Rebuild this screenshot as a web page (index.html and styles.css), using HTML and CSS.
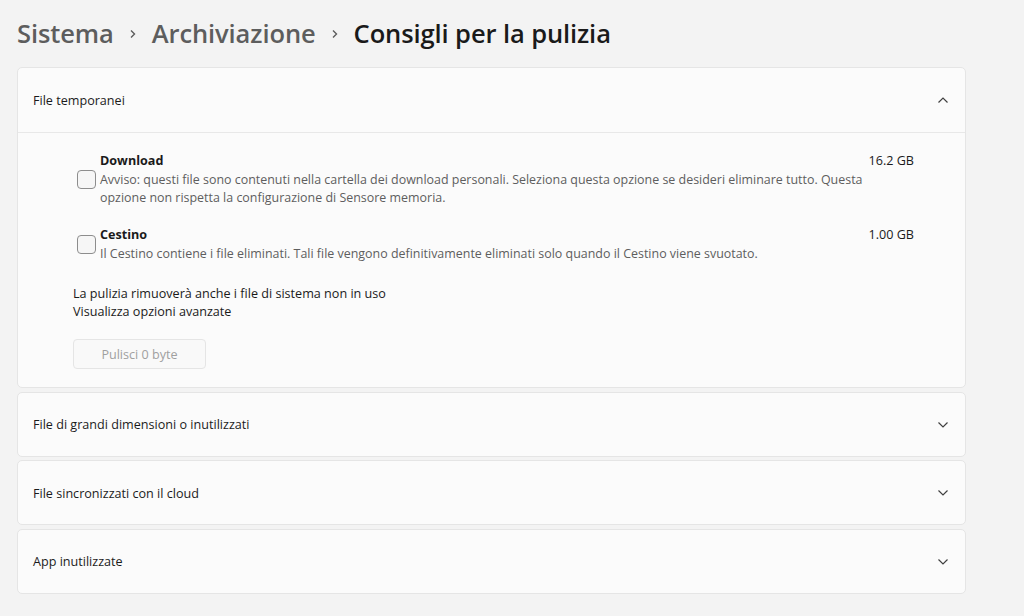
FILE: index.html
```html
<!DOCTYPE html>
<html lang="it">
<head>
<meta charset="utf-8">
<title>Consigli per la pulizia</title>
<link rel="stylesheet" href="styles.css">
</head>
<body>
<div class="page">
  <h1 class="crumbs">
    <span class="crumb">Sistema</span>
    <svg class="sep" width="10" height="12" viewBox="0 0 10 12"><path d="M3 2.5 L6.5 6 L3 9.5" fill="none" stroke="#5c5c5c" stroke-width="1.4"/></svg>
    <span class="crumb">Archiviazione</span>
    <svg class="sep" width="10" height="12" viewBox="0 0 10 12"><path d="M3 2.5 L6.5 6 L3 9.5" fill="none" stroke="#5c5c5c" stroke-width="1.4"/></svg>
    <span class="crumb current">Consigli per la pulizia</span>
  </h1>

  <div class="cards">
    <section class="card">
      <div class="card-head open">
        <span class="head-label">File temporanei</span>
        <svg class="chev" width="12" height="8" viewBox="0 0 12 8"><path d="M1.5 6.5 L6 2 L10.5 6.5" fill="none" stroke="#404040" stroke-width="1.2"/></svg>
      </div>
      <div class="card-body">
        <div class="item">
          <span class="check"></span>
          <div class="item-text">
            <div class="item-title">Download</div>
            <div class="item-desc">Avviso: questi file sono contenuti nella cartella dei download personali. Seleziona questa opzione se desideri eliminare tutto. Questa opzione non rispetta la configurazione di Sensore memoria.</div>
          </div>
          <div class="item-size">16.2 GB</div>
        </div>
        <div class="item">
          <span class="check"></span>
          <div class="item-text">
            <div class="item-title">Cestino</div>
            <div class="item-desc">Il Cestino contiene i file eliminati. Tali file vengono definitivamente eliminati solo quando il Cestino viene svuotato.</div>
          </div>
          <div class="item-size">1.00 GB</div>
        </div>
        <div class="note">
          <div>La pulizia rimuoverà anche i file di sistema non in uso</div>
          <div>Visualizza opzioni avanzate</div>
        </div>
        <button class="btn" disabled>Pulisci 0 byte</button>
      </div>
    </section>

    <section class="card">
      <div class="card-head">
        <span class="head-label">File di grandi dimensioni o inutilizzati</span>
        <svg class="chev" width="12" height="8" viewBox="0 0 12 8"><path d="M1.5 1.5 L6 6 L10.5 1.5" fill="none" stroke="#404040" stroke-width="1.2"/></svg>
      </div>
    </section>
    <section class="card">
      <div class="card-head">
        <span class="head-label">File sincronizzati con il cloud</span>
        <svg class="chev" width="12" height="8" viewBox="0 0 12 8"><path d="M1.5 1.5 L6 6 L10.5 1.5" fill="none" stroke="#404040" stroke-width="1.2"/></svg>
      </div>
    </section>
    <section class="card">
      <div class="card-head">
        <span class="head-label">App inutilizzate</span>
        <svg class="chev" width="12" height="8" viewBox="0 0 12 8"><path d="M1.5 1.5 L6 6 L10.5 1.5" fill="none" stroke="#404040" stroke-width="1.2"/></svg>
      </div>
    </section>
  </div>
</div>
</body>
</html>
```

FILE: styles.css
```css
* { box-sizing: border-box; }
html, body { margin: 0; padding: 0; }
body {
  background: #f3f3f3;
  font-family: "Open Sans", "Noto Sans", sans-serif;
  font-size: 12.6px;
  color: #1b1b1b;
  width: 1024px;
  height: 616px;
  overflow: hidden;
}
.page {
  padding: 14px 58px 0 17px;
}
.crumbs {
  margin: 0;
  display: flex;
  align-items: center;
  gap: 14px;
  height: 38px;
  font-size: 25.5px;
  font-weight: 600;
  letter-spacing: -0.1px;
  line-height: 38px;
}
.crumb { color: #5d5d5d; }
.crumb.current { color: #1a1a1a; }
.sep { flex: none; margin-top: 1px; }

.cards {
  margin-top: 15px;
  display: flex;
  flex-direction: column;
  gap: 3px;
}
.card {
  background: #fbfbfb;
  border: 1px solid #e5e5e5;
  border-radius: 5px;
}
.card-head {
  height: 63px;
  display: flex;
  align-items: center;
  justify-content: space-between;
  padding: 1px 16px 0 15px;
}
.card-head.open {
  height: 65px;
  padding-top: 0;
  border-bottom: 1px solid #e8e8e8;
}
.card + .card { margin-top: 0.5px; }
.chev { flex: none; }

.card-body {
  padding: 19px 51px 18px 55px;
}
.item {
  display: flex;
  align-items: center;
  padding-left: 4px;
  margin-bottom: 19px;
}
.check {
  flex: none;
  width: 19px;
  height: 19px;
  border: 1px solid #8d8d8d;
  border-radius: 4px;
  background: #f6f6f6;
  margin-right: 4px;
}
.item-text { flex: 1; min-width: 0; line-height: 18px; }
.item-title { font-weight: 700; color: #1a1a1a; }
.item-desc { color: #5e5e5e; margin-top: 1px; font-size: 12.45px; }
.item-size {
  flex: none;
  align-self: flex-start;
  line-height: 18px;
  color: #1a1a1a;
  white-space: nowrap;
}
.note {
  margin-top: 22px;
  line-height: 18px;
  color: #1a1a1a;
}
.btn {
  display: block;
  margin-top: 18px;
  width: 133px;
  height: 30px;
  border: 1px solid #e5e5e5;
  border-radius: 4px;
  background: #f9f9f9;
  color: #a0a0a0;
  font-family: inherit;
  font-size: 12.6px;
}
```
